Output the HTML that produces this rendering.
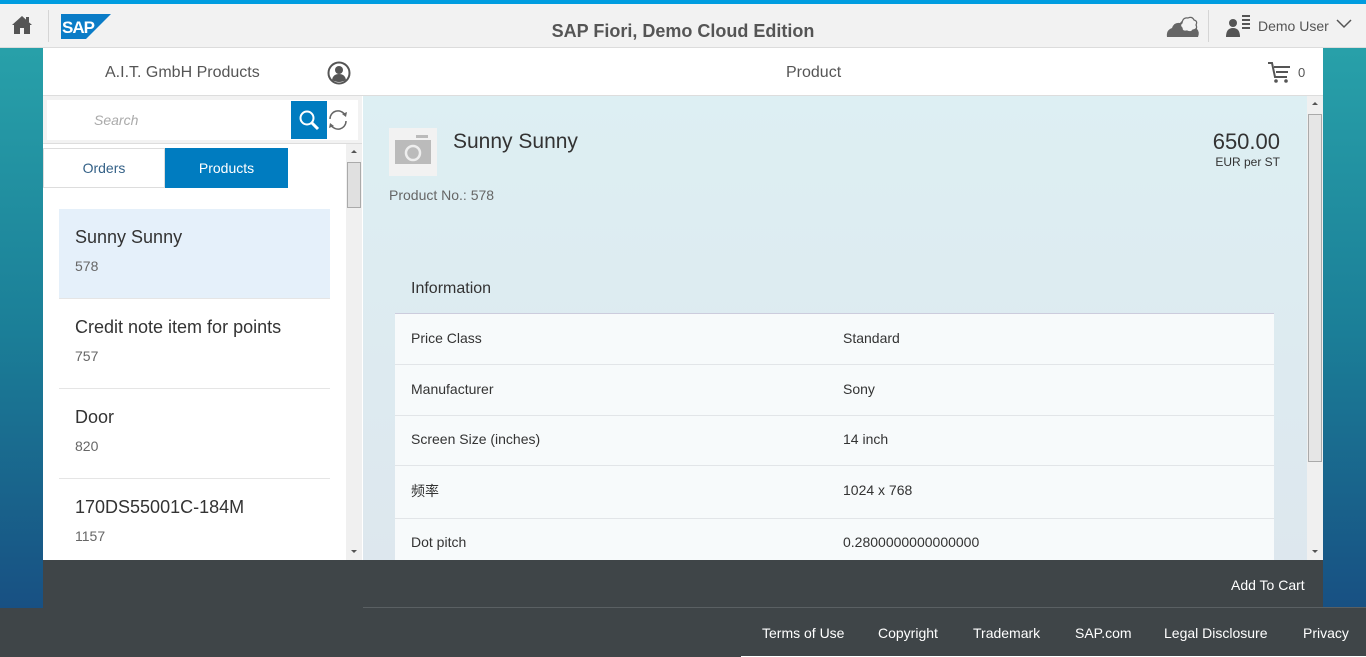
<!DOCTYPE html>
<html><head><meta charset="utf-8"><style>
*{box-sizing:border-box;margin:0;padding:0}
body{width:1366px;height:657px;overflow:hidden;position:relative;font-family:"Liberation Sans","Noto Sans CJK SC",sans-serif;color:#333;background:linear-gradient(180deg,#2aa6ac 0%,#1b7f98 50%,#17487f 100%)}
.abs{position:absolute}
</style></head><body>
<div class="abs" style="left:0;top:0;width:1366px;height:4px;background:#009de0"></div>
<div class="abs" style="left:0;top:4px;width:1366px;height:44px;background:#f2f2f2;border-bottom:1px solid #dcdcdc"></div>
<svg class="abs" style="left:11px;top:14px" width="22" height="22" viewBox="0 0 22 22"><path d="M11 2 L1 11 L3 11 L3 20 L9 20 L9 14 L13 14 L13 20 L19 20 L19 11 L21 11 Z" fill="#555"/><rect x="15" y="3" width="3" height="5" fill="#555"/></svg>
<div class="abs" style="left:48px;top:10px;width:1px;height:32px;background:#d5d5d5"></div>
<svg class="abs" style="left:61px;top:14px" width="50" height="25" viewBox="0 0 50 25"><path d="M0 0H50L25 25H0Z" fill="#0a7cc7"/><text x="1" y="19" font-family="Liberation Sans" font-weight="bold" font-size="17" fill="#fff" letter-spacing="-1">SAP</text></svg>
<div class="abs" style="left:0;top:21px;width:1366px;text-align:center;font-size:18px;font-weight:bold;color:#555">SAP Fiori, Demo Cloud Edition</div>
<svg class="abs" style="left:1166px;top:14px" width="34" height="24" viewBox="0 0 34 24"><path d="M1 23 Q0 16 6 14 Q8 8 14 9 Q18 4 24 6 Q32 8 31 15 Q34 18 32 23 Z" fill="#666"/><path d="M16 9 Q17 3 22 4 Q26 2 28 6 Q32 7 30 11 Q32 15 27 16 Q25 19 21 17 Q16 18 16 14 Q13 11 16 9Z" fill="#f2f2f2" stroke="#666" stroke-width="1.2"/></svg>
<div class="abs" style="left:1208px;top:10px;width:1px;height:32px;background:#d5d5d5"></div>
<svg class="abs" style="left:1226px;top:14px" width="26" height="24" viewBox="0 0 26 24"><circle cx="7" cy="9" r="4" fill="#555"/><path d="M0 23 Q0 14 7 14 Q14 14 14 23Z" fill="#555"/><rect x="16" y="1" width="8" height="2" fill="#555"/><rect x="16" y="5" width="8" height="2" fill="#555"/><rect x="16" y="9" width="8" height="2" fill="#555"/><rect x="16" y="13" width="8" height="2" fill="#555"/></svg>
<div class="abs" style="left:1258px;top:18px;font-size:14px;color:#555">Demo User</div>
<svg class="abs" style="left:1336px;top:19px" width="16" height="10" viewBox="0 0 16 10"><path d="M1 1 L8 8 L15 1" fill="none" stroke="#555" stroke-width="1.5"/></svg>

<div class="abs" style="left:43px;top:48px;width:1280px;height:48px;background:#fff;border-bottom:1px solid #ddd"></div>
<div class="abs" style="left:105px;top:64px;font-size:16px;color:#555">A.I.T. GmbH Products</div>
<svg class="abs" style="left:327px;top:61px" width="24" height="24" viewBox="0 0 24 24"><circle cx="12" cy="12" r="10.5" fill="none" stroke="#555" stroke-width="2"/><circle cx="12" cy="9" r="4" fill="#555"/><path d="M5 19 Q6 13 12 13 Q18 13 19 19 Q12 23 5 19Z" fill="#555"/></svg>
<div class="abs" style="left:786px;top:64px;font-size:16px;color:#555">Product</div>
<svg class="abs" style="left:1267px;top:61px" width="24" height="23" viewBox="0 0 24 23"><path d="M1 2 H5 L8 16 H20" fill="none" stroke="#555" stroke-width="2"/><path d="M7 6 H23 M9 11 H21" stroke="#555" stroke-width="2"/><circle cx="9" cy="20" r="1.8" fill="#555"/><circle cx="19" cy="20" r="1.8" fill="#555"/></svg>
<div class="abs" style="left:1298px;top:65px;font-size:13px;color:#555">0</div>

<!-- master -->
<div class="abs" style="left:43px;top:96px;width:320px;height:464px;background:#fff"></div>
<div class="abs" style="left:43px;top:96px;width:319px;height:48px;background:#f2f2f2;border-bottom:1px solid #ddd"></div>
<div class="abs" style="left:47px;top:100px;width:311px;height:40px;background:#fff"></div>
<div class="abs" style="left:94px;top:112px;font-size:14px;font-style:italic;color:#aaa">Search</div>
<div class="abs" style="left:291px;top:101px;width:36px;height:38px;background:#007cc0"></div>
<svg class="abs" style="left:298px;top:109px" width="22" height="22" viewBox="0 0 22 22"><circle cx="9" cy="9" r="6.5" fill="none" stroke="#fff" stroke-width="2"/><path d="M14 14 L20 20" stroke="#fff" stroke-width="3"/></svg>
<svg class="abs" style="left:327px;top:108px" width="22" height="24" viewBox="0 0 22 24"><path d="M3 11 A8 8 0 0 1 18 7 M19 13 A8 8 0 0 1 4 17" fill="none" stroke="#666" stroke-width="1.5"/><path d="M15 6 L20 4 L19 9Z M7 18 L2 20 L3 15Z" fill="#666"/></svg>
<div class="abs" style="left:43px;top:148px;width:122px;height:40px;border:1px solid #ddd;text-align:center;line-height:38px;font-size:14px;color:#346187">Orders</div>
<div class="abs" style="left:165px;top:148px;width:123px;height:40px;background:#007cc0;text-align:center;line-height:40px;font-size:14px;color:#fff">Products</div>
<div class="abs" style="left:346px;top:144px;width:16px;height:416px;background:#f0f0f0"></div>
<div class="abs" style="left:351px;top:150px;width:0;height:0;border-left:3px solid transparent;border-right:3px solid transparent;border-bottom:3px solid #555"></div>
<div class="abs" style="left:351px;top:550px;width:0;height:0;border-left:3px solid transparent;border-right:3px solid transparent;border-top:3px solid #555"></div>
<div class="abs" style="left:347px;top:162px;width:14px;height:46px;background:#e0e0e0;border:1px solid #aaa"></div>
<div class="abs" style="left:59px;top:209px;width:271px;height:89px;background:#e5f0fa"></div>
<div class="abs" style="left:59px;top:298px;width:271px;height:1px;background:#e5e5e5"></div>
<div class="abs" style="left:59px;top:388px;width:271px;height:1px;background:#e5e5e5"></div>
<div class="abs" style="left:59px;top:478px;width:271px;height:1px;background:#e5e5e5"></div>
<div class="abs" style="left:75px;top:227px;font-size:18px">Sunny Sunny</div>
<div class="abs" style="left:75px;top:258px;font-size:14px;color:#666">578</div>
<div class="abs" style="left:75px;top:317px;font-size:18px">Credit note item for points</div>
<div class="abs" style="left:75px;top:348px;font-size:14px;color:#666">757</div>
<div class="abs" style="left:75px;top:407px;font-size:18px">Door</div>
<div class="abs" style="left:75px;top:438px;font-size:14px;color:#666">820</div>
<div class="abs" style="left:75px;top:497px;font-size:18px">170DS55001C-184M</div>
<div class="abs" style="left:75px;top:528px;font-size:14px;color:#666">1157</div>

<!-- detail -->
<div class="abs" style="left:363px;top:96px;width:960px;height:464px;background:linear-gradient(180deg,#ddeff3,#dde7ee)"></div>
<div class="abs" style="left:1307px;top:96px;width:16px;height:464px;background:#f0f0f0"></div>
<div class="abs" style="left:1312px;top:102px;width:0;height:0;border-left:3px solid transparent;border-right:3px solid transparent;border-bottom:3px solid #555"></div>
<div class="abs" style="left:1312px;top:550px;width:0;height:0;border-left:3px solid transparent;border-right:3px solid transparent;border-top:3px solid #555"></div>
<div class="abs" style="left:1308px;top:114px;width:14px;height:348px;background:#e6e6e6;border:1px solid #aaa"></div>
<div class="abs" style="left:389px;top:128px;width:48px;height:48px;background:#f2f2f2"></div>
<svg class="abs" style="left:395px;top:134px" width="36" height="32" viewBox="0 0 36 32"><rect x="0" y="6" width="36" height="24" fill="#bbb"/><rect x="21" y="1" width="12" height="3" fill="#bbb"/><circle cx="18" cy="19" r="7" fill="none" stroke="#eee" stroke-width="2.5"/></svg>
<div class="abs" style="left:453px;top:130px;font-size:21px">Sunny Sunny</div>
<div class="abs" style="left:389px;top:187px;font-size:14px;color:#666">Product No.: 578</div>
<div class="abs" style="left:1160px;top:129px;width:120px;text-align:right;font-size:22px">650.00</div>
<div class="abs" style="left:1160px;top:155px;width:120px;text-align:right;font-size:12px">EUR per ST</div>
<div class="abs" style="left:411px;top:280px;font-size:16px">Information</div>
<div class="abs" style="left:395px;top:313px;width:879px;height:247px;background:#f7fafb;border-top:1px solid #ccd"></div>
<div class="abs" style="left:395px;top:364px;width:879px;height:1px;background:#e2e5e8"></div>
<div class="abs" style="left:395px;top:415px;width:879px;height:1px;background:#e2e5e8"></div>
<div class="abs" style="left:395px;top:465px;width:879px;height:1px;background:#e2e5e8"></div>
<div class="abs" style="left:395px;top:518px;width:879px;height:1px;background:#e2e5e8"></div>
<div class="abs" style="left:411px;top:330px;font-size:14px">Price Class</div><div class="abs" style="left:843px;top:330px;font-size:14px">Standard</div>
<div class="abs" style="left:411px;top:381px;font-size:14px">Manufacturer</div><div class="abs" style="left:843px;top:381px;font-size:14px">Sony</div>
<div class="abs" style="left:411px;top:431px;font-size:14px">Screen Size (inches)</div><div class="abs" style="left:843px;top:431px;font-size:14px">14 inch</div>
<div class="abs" style="left:411px;top:481px;font-size:14px">频率</div><div class="abs" style="left:843px;top:482px;font-size:14px">1024 x 768</div>
<div class="abs" style="left:411px;top:534px;font-size:14px">Dot pitch</div><div class="abs" style="left:843px;top:534px;font-size:14px">0.2800000000000000</div>

<!-- footers -->
<div class="abs" style="left:43px;top:560px;width:1280px;height:48px;background:#3f4548"></div>
<div class="abs" style="left:1231px;top:577px;font-size:14px;color:#fff">Add To Cart</div>
<div class="abs" style="left:0;top:608px;width:1366px;height:49px;background:#3f4548"></div>
<div class="abs" style="left:363px;top:607px;width:1003px;height:1px;background:#5a6063"></div>
<div class="abs" style="left:741px;top:656px;width:625px;height:1px;background:#fff"></div>
<div class="abs" style="left:762px;top:625px;font-size:14px;color:#fff">Terms of Use</div>
<div class="abs" style="left:878px;top:625px;font-size:14px;color:#fff">Copyright</div>
<div class="abs" style="left:973px;top:625px;font-size:14px;color:#fff">Trademark</div>
<div class="abs" style="left:1075px;top:625px;font-size:14px;color:#fff">SAP.com</div>
<div class="abs" style="left:1164px;top:625px;font-size:14px;color:#fff">Legal Disclosure</div>
<div class="abs" style="left:1303px;top:625px;font-size:14px;color:#fff">Privacy</div>
</body></html>
